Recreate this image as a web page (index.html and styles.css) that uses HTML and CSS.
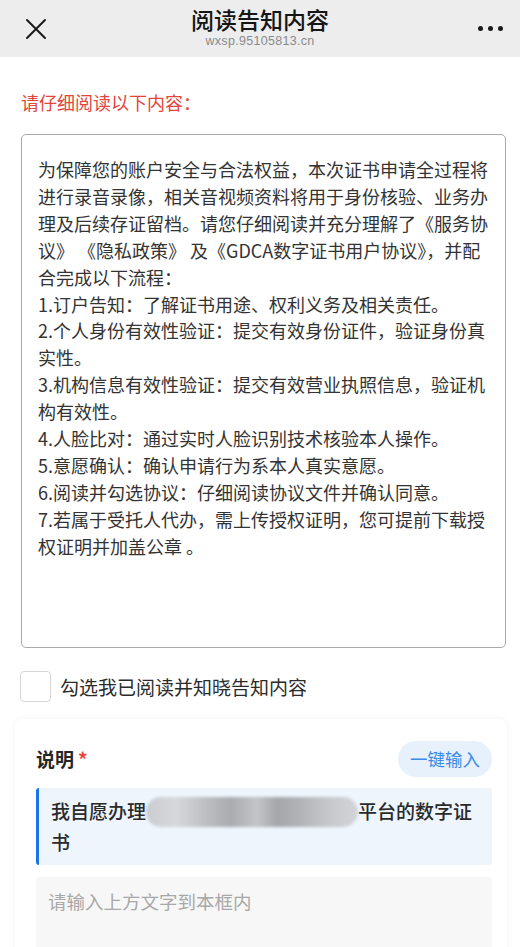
FILE: index.html
```html
<!DOCTYPE html>
<html lang="zh-CN">
<head>
<meta charset="utf-8">
<title>阅读告知内容</title>
<link rel="stylesheet" href="styles.css">
</head>
<body>
<header class="topbar">
  <div class="topbar-left">
    <svg class="icon-close" width="22" height="22" viewBox="0 0 22 22"><path d="M2 2 L20 20 M20 2 L2 20" stroke="#1a1a1a" stroke-width="2" fill="none" stroke-linecap="round"/></svg>
  </div>
  <div class="topbar-title">
    <div class="title">阅读告知内容</div>
    <div class="subtitle">wxsp.95105813.cn</div>
  </div>
  <div class="topbar-right">
    <span class="dot"></span><span class="dot"></span><span class="dot"></span>
  </div>
</header>

<main class="page">
  <p class="notice">请仔细阅读以下内容：</p>
  <div class="readbox">
    <p>为保障您的账户安全与合法权益，本次证书申请全过程将<br>进行录音录像，相关音视频资料将用于身份核验、业务办<br>理及后续存证留档。请您仔细阅读并充分理解了《服务协<br>议》 《隐私政策》 及《GDCA数字证书用户协议》，并配<br>合完成以下流程：</p>
    <p>1.订户告知：了解证书用途、权利义务及相关责任。</p>
    <p>2.个人身份有效性验证：提交有效身份证件，验证身份真<br>实性。</p>
    <p>3.机构信息有效性验证：提交有效营业执照信息，验证机<br>构有效性。</p>
    <p>4.人脸比对：通过实时人脸识别技术核验本人操作。</p>
    <p>5.意愿确认：确认申请行为系本人真实意愿。</p>
    <p>6.阅读并勾选协议：仔细阅读协议文件并确认同意。</p>
    <p>7.若属于受托人代办，需上传授权证明，您可提前下载授<br>权证明并加盖公章 。</p>
  </div>

  <label class="agree">
    <span class="checkbox"></span>
    <span class="agree-text">勾选我已阅读并知晓告知内容</span>
  </label>

  <section class="card">
    <div class="card-head">
      <div class="label">说明<span class="req">*</span></div>
      <button class="quick-btn" type="button">一键输入</button>
    </div>
    <div class="quote">我自愿办理<span class="masked"></span>平台的数字证书</div>
    <div class="input-box">请输入上方文字到本框内</div>
  </section>
</main>
</body>
</html>
```

FILE: styles.css
```css
* { box-sizing: border-box; }
html, body { margin: 0; padding: 0; }
body {
  width: 520px;
  height: 947px;
  overflow: hidden;
  background: #ffffff;
  font-family: "Noto Sans CJK SC", "Noto Sans", sans-serif;
  color: #2b2b2b;
}

.topbar {
  height: 57px;
  background: #ededed;
  display: grid;
  grid-template-columns: 90px 1fr 90px;
  align-items: center;
}
.topbar-left { padding-left: 25px; display: flex; align-items: center; }
.icon-close { display: block; }
.topbar-title {
  text-align: center;
  align-self: start;
  padding-top: 7px;
}
.title {
  font-size: 23px;
  line-height: 24px;
  font-weight: 500;
  color: #151515;
}
.subtitle {
  font-family: "Liberation Sans", Arial, sans-serif;
  font-size: 12.5px;
  line-height: 14px;
  margin-top: 3px;
  color: #8a8a8a;
  letter-spacing: 0.3px;
}
.topbar-right {
  display: flex;
  justify-content: flex-end;
  gap: 5px;
  padding-right: 17px;
}
.dot { width: 5px; height: 5px; border-radius: 50%; background: #1a1a1a; }

.page { padding: 0 14px 0 21px; }

.notice {
  margin: 32px 0 0;
  font-size: 18px;
  line-height: 26px;
  color: #e1453c;
}

.readbox {
  margin-top: 19px;
  width: 485px;
  height: 514px;
  border: 1.5px solid #a9a9a9;
  border-radius: 5px;
  padding: 21px 10px 0 16px;
  font-size: 18px;
  line-height: 26.9px;
  color: #333333;
  white-space: nowrap;
}
.readbox p { margin: 0; }

.agree {
  display: flex;
  align-items: center;
  gap: 9px;
  margin-top: 23px;
  margin-left: -1px;
}
.checkbox {
  width: 31px;
  height: 31px;
  border: 1.5px solid #d6d6d6;
  border-radius: 4px;
  background: #fff;
}
.agree-text {
  font-size: 19px;
  line-height: 26px;
  color: #2b2b2b;
}

.card {
  margin: 17px 0 0 -6px;
  width: 492px;
  background: #fff;
  border-radius: 8px;
  box-shadow: 0 0 6px rgba(0, 0, 0, 0.06);
  padding: 22px 15px 0 21px;
  height: 260px;
}
.card-head {
  display: flex;
  align-items: center;
  justify-content: space-between;
}
.label {
  font-size: 19px;
  font-weight: 700;
  color: #262626;
  line-height: 26px;
}
.req { color: #e8443c; margin-left: 4px; font-weight: 700; }
.quick-btn {
  border: none;
  background: #e6f1fc;
  color: #3a8ae6;
  font-family: "Noto Sans CJK SC", sans-serif;
  font-size: 17.5px;
  line-height: 24px;
  padding: 0 12px;
  border-radius: 18px;
  height: 36px;
  white-space: nowrap;
}

.quote {
  margin-top: 11px;
  background: #eef5fd;
  border-left: 3px solid #1d74e8;
  border-radius: 3px;
  padding: 8px 12px 10px 12px;
  font-size: 19px;
  line-height: 29px;
  font-weight: 500;
  color: #2a2a2a;
  height: 77px;
}
.masked {
  display: inline-block;
  vertical-align: middle;
  width: 212px;
  height: 30px;
  margin-top: -4px;
  border-radius: 15px;
  background: linear-gradient(90deg, #c9cbcf 0, #d6d8dc 14%, #b9bbbf 30%, #a9abaf 40%, #c3c5c9 52%, #a4a6aa 62%, #b3b5b9 74%, #c8cacd 88%, #d2d4d8 100%);
  filter: blur(1.5px);
}

.input-box {
  margin-top: 12px;
  background: #f7f7f7;
  border-radius: 3px;
  height: 100px;
  padding: 11px 12px;
  font-size: 18.5px;
  line-height: 26px;
  color: #a8a8a8;
}
```
